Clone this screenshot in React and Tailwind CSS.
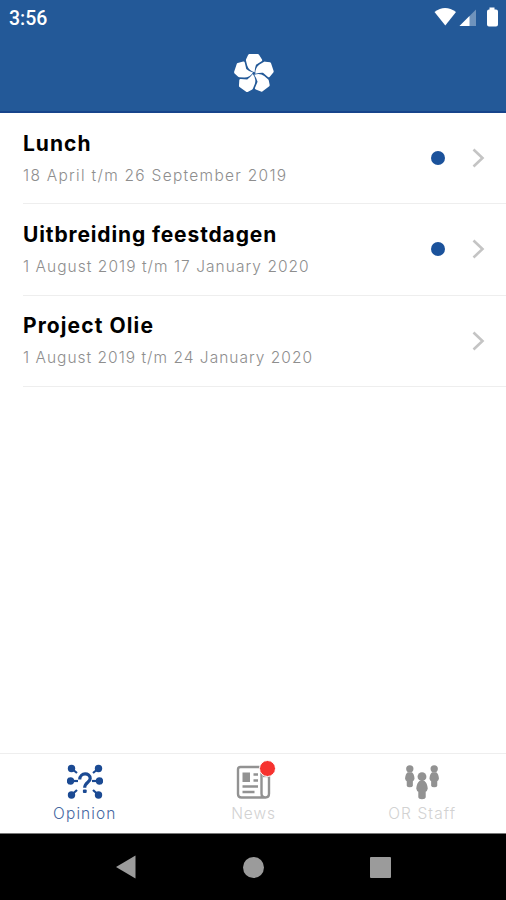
const surveys = [
  { title: 'Lunch', period: '18 April t/m 26 September 2019', unread: true, titleSpacing: 'tracking-[1px]', periodSpacing: 'tracking-[1.28px]' },
  { title: 'Uitbreiding feestdagen', period: '1 August 2019 t/m 17 January 2020', unread: true, titleSpacing: 'tracking-[0.87px]', periodSpacing: 'tracking-[1.04px]' },
  { title: 'Project Olie', period: '1 August 2019 t/m 24 January 2020', unread: false, titleSpacing: 'tracking-[1.1px]', periodSpacing: 'tracking-[1.01px]' },
];

function FlowerLogo() {
  return (
    <svg width="60" height="60" viewBox="-31 -29.5 60 60" fill="#fff">
      {[0, 72, 144, 216, 288].map(angle => (
        <path
          key={angle}
          transform={`rotate(${angle})`}
          d="M-4.8 -19.4H3.8Q4.6 -19.4 5 -18.7L8 -14Q8.6 -12.8 7.6 -12.2L2 -8.8Q0.8 -6 0.6 -1.2Q-5.2 -2.8 -6.8 -8L-8 -12.8Q-8.2 -13.6 -7.8 -14.4L-5.8 -18.8Z"
        />
      ))}
    </svg>
  );
}

function StatusBar() {
  return (
    <div className="flex h-9 items-center justify-between pl-[9px] pr-1.5 text-white">
      <span className="pt-0.5 font-[Roboto] text-[19.5px] font-medium leading-9">3:56</span>
      <svg width="66" height="36" viewBox="0 0 66 36" fill="#fff">
        <path d="M0.5 12Q11 4 22 12L11.3 25.5Z" />
        <path d="M42 9.5V26H25.5Z" opacity="0.35" />
        <path d="M35.5 16V26H25.5Z" />
        <path d="M55.5 7.5H60.5V9.5H62Q64 9.5 64 11.5V24.5Q64 26.5 62 26.5H55Q53 26.5 53 24.5V11.5Q53 9.5 55 9.5H55.5Z" />
      </svg>
    </div>
  );
}

function SurveyRow({ survey }) {
  return (
    <div className="ml-[23px] flex h-[91.33px] items-center border-b border-[#eeeeee] pr-[21px]">
      <div className="flex-1 pt-[3px]">
        <h2 className={`whitespace-nowrap text-[21px] font-bold leading-7 text-black ${survey.titleSpacing}`}>
          {survey.title}
        </h2>
        <p className={`mt-1 whitespace-nowrap text-[15.5px] font-light leading-7 text-[#8e8e8e] ${survey.periodSpacing}`}>
          {survey.period}
        </p>
      </div>
      {survey.unread && <span className="mr-[27px] size-3.5 rounded-full bg-[#1b529b]" />}
      <svg width="13" height="20" viewBox="0 0 13 20" fill="none" stroke="#c4c4c4" strokeWidth="2.6">
        <path d="M1.5 1.5L10.5 10L1.5 18.5" />
      </svg>
    </div>
  );
}

function OpinionIcon() {
  // dot position, then the inner end of its stem
  const nodes = [
    [4.5, 4.5, 10, 9],
    [3.5, 17, 11, 17],
    [4.5, 31, 10, 26],
    [31.5, 4.5, 26, 9],
    [32.5, 17, 25, 17],
    [31.5, 31, 26, 26],
  ];
  return (
    <svg className="ml-[2px]" width="36" height="36" viewBox="0 0 36 36" fill="none" stroke="#1b4a93">
      {nodes.map(([x, y, tx, ty]) => (
        <g key={`${x}-${y}`}>
          <path d={`M${x} ${y}L${tx} ${ty}`} strokeWidth="2.2" />
          <circle cx={x} cy={y} r="3.7" fill="#1b4a93" stroke="none" />
        </g>
      ))}
      <path d="M12.7 15.5C13 8 23.2 8.5 23.2 14.5C23.2 18.5 17.7 18 17.7 23.8" strokeWidth="3.2" />
      <rect x="15.9" y="25.5" width="3.8" height="3.6" rx="1" fill="#1b4a93" stroke="none" />
    </svg>
  );
}

function NewsIcon() {
  return (
    <svg className="ml-px" width="36" height="36" viewBox="0 0 36 36" fill="none" stroke="#929292" strokeWidth="2.4">
      <path d="M33 12V29.5Q33 33.5 29.5 33.5H5.5Q2 33.5 2 30V5.5Q2 3 4.5 3H23Q25.5 3 25.5 5.5V29.5Q25.5 33.5 29.5 33.5" />
      <path d="M27 12H33" />
      <rect x="6.5" y="8.5" width="7.5" height="9.5" fill="#929292" stroke="none" />
      <path d="M17.5 10.5H22M17.5 16.5H22M6.5 22.5H22M6.5 28H18.5" />
    </svg>
  );
}

function Person() {
  return (
    <>
      <circle cx="0" cy="0" r="4.3" />
      <path d="M-2.5 4.2H2.5Q5 6 5.6 11.5Q5.2 14 3.6 14.5V20Q3.2 21.8 0 21.8Q-3.2 21.8 -3.6 20V14.5Q-5.2 14 -5.6 11.5Q-5 6 -2.5 4.2Z" />
    </>
  );
}

function StaffIcon() {
  return (
    <svg className="ml-px" width="36" height="36" viewBox="0 0 36 36" fill="#929292">
      <g transform="translate(5.8 4.8) scale(0.85)"><Person /></g>
      <g transform="translate(30.2 4.8) scale(0.85)"><Person /></g>
      <g transform="translate(18 12.7) scale(1.03)"><Person /></g>
    </svg>
  );
}

function Tab({ label, labelClass, children }) {
  return (
    <div className="flex flex-1 flex-col items-center pt-2.5">
      <div className="relative">{children}</div>
      <span className={`mt-1 whitespace-nowrap pl-px text-[15.5px] leading-5 ${labelClass}`}>{label}</span>
    </div>
  );
}

export default function App() {
  return (
    <div className="flex h-[900px] w-[506px] flex-col overflow-hidden bg-white font-['Inter',sans-serif]">
      <header className="h-[113px] border-b-2 border-[#17448b] bg-[#235998]">
        <StatusBar />
        <div className="mt-2 flex justify-center pr-px">
          <FlowerLogo />
        </div>
      </header>

      <main className="flex-1">
        {surveys.map(survey => (
          <SurveyRow key={survey.title} survey={survey} />
        ))}
      </main>

      <nav className="flex h-[80px] border-t border-[#eeeeee] bg-white">
        <Tab label="Opinion" labelClass="text-[#4568a2] tracking-[1.1px] font-light">
          <OpinionIcon />
        </Tab>
        <Tab label="News" labelClass="text-[#d2d2d2] tracking-[0.9px] font-light">
          <NewsIcon />
          <span className="absolute -top-1 left-[24px] size-[17px] rounded-full border border-white bg-[#f6322f]" />
        </Tab>
        <Tab label="OR Staff" labelClass="text-[#d2d2d2] tracking-[1.1px] font-light">
          <StaffIcon />
        </Tab>
      </nav>

      <div className="flex h-[67px] items-center justify-around border-t border-[#777777] bg-black px-[62px]">
        <svg width="22" height="24" viewBox="0 0 22 24" fill="#9b9b9b"><path d="M1 12L20.5 0.5V23.5Z" /></svg>
        <span className="size-[21px] rounded-full bg-[#9b9b9b]" />
        <span className="size-[21px] rounded-[1px] bg-[#9b9b9b]" />
      </div>
    </div>
  );
}
